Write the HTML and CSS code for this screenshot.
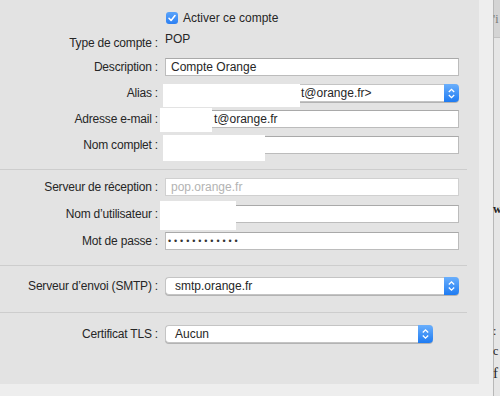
FILE: index.html
```html
<!DOCTYPE html>
<html lang="fr">
<head>
    <meta charset="UTF-8">
    <title>Informations du compte</title>
    <link rel="stylesheet" href="styles.css">
</head>
<body>
    <div class="screen">
        <div class="sheet">
            <div class="panel">
                <div class="row row-check">
                    <span class="label"></span>
                    <label class="check">
                        <span class="box">
                            <svg width="12" height="12" viewBox="0 0 12 12"><path d="M3 6.3 L5.1 8.5 L9 3.6" fill="none" stroke="#fff" stroke-width="1.6" stroke-linecap="round" stroke-linejoin="round"/></svg>
                        </span>
                        Activer ce compte
                    </label>
                </div>
                <div class="row row-type">
                    <span class="label">Type de compte :</span>
                    <span class="value">POP</span>
                </div>
                <div class="row">
                    <span class="label">Description :</span>
                    <div class="field"><div class="input">Compte Orange</div></div>
                </div>
                <div class="row">
                    <span class="label">Alias :</span>
                    <div class="field">
                        <div class="select"><span class="select-text alias-text">t@orange.fr&gt;</span><span class="stepper"><svg width="15" height="19" viewBox="0 0 15 19"><path d="M4.8 8 L7.5 5.3 L10.2 8 M4.8 11 L7.5 13.7 L10.2 11" fill="none" stroke="#fff" stroke-width="1.3"/></svg></span></div>
                        <span class="mask mask-alias"></span>
                    </div>
                </div>
                <div class="row">
                    <span class="label">Adresse e-mail :</span>
                    <div class="field">
                        <div class="input email-text">t@orange.fr</div>
                        <span class="mask mask-email"></span>
                    </div>
                </div>
                <div class="row">
                    <span class="label">Nom complet :</span>
                    <div class="field">
                        <div class="input"></div>
                        <span class="mask mask-name"></span>
                    </div>
                </div>

                <div class="sep sep-1"></div>

                <div class="row row-server">
                    <span class="label">Serveur de réception :</span>
                    <div class="field"><div class="input input-light placeholder">pop.orange.fr</div></div>
                </div>
                <div class="row row-wide">
                    <span class="label">Nom d’utilisateur :</span>
                    <div class="field">
                        <div class="input"></div>
                        <span class="mask mask-user"></span>
                    </div>
                </div>
                <div class="row row-wide">
                    <span class="label">Mot de passe :</span>
                    <div class="field"><div class="input dots">••••••••••••</div></div>
                </div>

                <div class="sep sep-2"></div>

                <div class="row row-smtp">
                    <span class="label">Serveur d’envoi (SMTP) :</span>
                    <div class="field">
                        <div class="select"><span class="select-text">smtp.orange.fr</span><span class="stepper"><svg width="15" height="18" viewBox="0 0 15 18"><path d="M4.8 7.5 L7.5 4.8 L10.2 7.5 M4.8 10.5 L7.5 13.2 L10.2 10.5" fill="none" stroke="#fff" stroke-width="1.3"/></svg></span></div>
                    </div>
                </div>

                <div class="sep sep-3"></div>

                <div class="row row-tls">
                    <span class="label">Certificat TLS :</span>
                    <div class="field">
                        <div class="select select-short"><span class="select-text">Aucun</span><span class="stepper"><svg width="15" height="18" viewBox="0 0 15 18"><path d="M4.8 7.5 L7.5 4.8 L10.2 7.5 M4.8 10.5 L7.5 13.2 L10.2 10.5" fill="none" stroke="#fff" stroke-width="1.3"/></svg></span></div>
                    </div>
                </div>
            </div>
        </div>
        <div class="behind">
            <div class="behind-bar"><span class="frag frag-i">'i</span></div>
            <span class="frag frag-w">w</span>
            <span class="frag frag-dots">:</span>
            <span class="frag frag-c">c</span>
            <span class="frag frag-f">f</span>
        </div>
    </div>
</body>
</html>
```

FILE: styles.css
```css
body {
    margin: 0;
    padding: 0;
    font-family: "Liberation Sans", Arial, sans-serif;
    font-size: 12px;
    color: #262626;
    background-color: #eeeeee;
}
.screen {
    display: flex;
    width: 500px;
    height: 396px;
    overflow: hidden;
}
.sheet {
    width: 493px;
    flex: none;
}
.panel {
    width: 479px;
    height: 384px;
    padding-top: 6px;
    box-sizing: border-box;
    background-color: #e3e3e3;
}
.row {
    display: grid;
    grid-template-columns: 158px 294px;
    column-gap: 7px;
    align-items: center;
    height: 26px;
}
.label {
    text-align: right;
    white-space: nowrap;
    letter-spacing: -0.2px;
}
.row-check {
    height: 24px;
}
.row-type {
    height: 24px;
}
.row-type .label {
    padding-top: 2px;
}
.row-type .value {
    margin-top: -6px;
}
.row-server {
    margin-top: 3px;
    height: 27px;
}
.row-wide {
    height: 27px;
}
.row-smtp {
    margin-top: 6px;
    height: 27px;
}
.row-tls {
    margin-top: 7px;
    height: 27px;
}
.check {
    display: flex;
    align-items: center;
    margin-left: 1px;
}
.box {
    display: inline-flex;
    width: 12px;
    height: 12px;
    margin-right: 5px;
    border-radius: 3px;
    background: linear-gradient(#5aa3fa, #2c80f3);
}
.field {
    position: relative;
}
.input {
    height: 18px;
    line-height: 17px;
    padding-left: 5px;
    box-sizing: border-box;
    background-color: #fff;
    border: 1px solid #bcbcbc;
    border-top-color: #a9a9a9;
    white-space: nowrap;
    overflow: hidden;
}
.input-light {
    border-color: #d0d0d0;
}
.placeholder {
    color: #b3b3b3;
}
.email-text {
    padding-left: 48px;
}
.dots {
    font-size: 9px;
    letter-spacing: 2.9px;
    padding-left: 2px;
    color: #333;
}
.select {
    display: flex;
    height: 18px;
    box-sizing: border-box;
    background-color: #fff;
    border: 1px solid #c4c4c4;
    border-right: none;
    border-radius: 4px;
    box-shadow: 0 1px 0 #b3b3b3;
}
.select-short {
    width: 268px;
}
.select-text {
    flex: 1;
    padding-left: 9px;
    line-height: 16px;
    white-space: nowrap;
    overflow: hidden;
}
.alias-text {
    padding-left: 135px;
}
.stepper {
    display: flex;
    width: 15px;
    height: 18px;
    margin-top: -1px;
    border-radius: 0 4px 4px 0;
    background: linear-gradient(#6aaffc, #1e7bf2);
}
.mask {
    position: absolute;
    background-color: #fff;
}
.mask-alias {
    left: -2px;
    top: 0;
    width: 137px;
    height: 23px;
}
.mask-email {
    left: -5px;
    top: -2px;
    width: 52px;
    height: 24px;
}
.mask-name {
    left: -2px;
    top: -1px;
    width: 102px;
    height: 26px;
}
.mask-user {
    left: -5px;
    top: -4px;
    width: 76px;
    height: 29px;
}
.sep {
    width: 467px;
    height: 1px;
    background-color: #cdcdcd;
}
.sep-1 {
    margin-top: 11px;
}
.sep-2 {
    margin-top: 11px;
}
.sep-3 {
    margin-top: 13px;
}
.behind {
    flex: 1;
    display: flex;
    flex-direction: column;
    border-left: 1px solid #b8b8b8;
    background-color: #e6e6e6;
    font-family: "Liberation Serif", serif;
    color: #222;
}
.behind-bar {
    height: 37px;
    background-color: #d4d4d4;
    border-bottom: 1px solid #c2c2c2;
}
.frag {
    display: block;
    font-size: 12px;
    line-height: 14px;
    margin-left: -1px;
}
.frag-i {
    margin-top: 12px;
    color: #777;
}
.frag-w {
    margin-top: 164px;
    font-weight: bold;
}
.frag-dots {
    margin-top: 108px;
}
.frag-c {
    margin-top: 6px;
}
.frag-f {
    margin-top: 8px;
    font-size: 15px;
}
```
